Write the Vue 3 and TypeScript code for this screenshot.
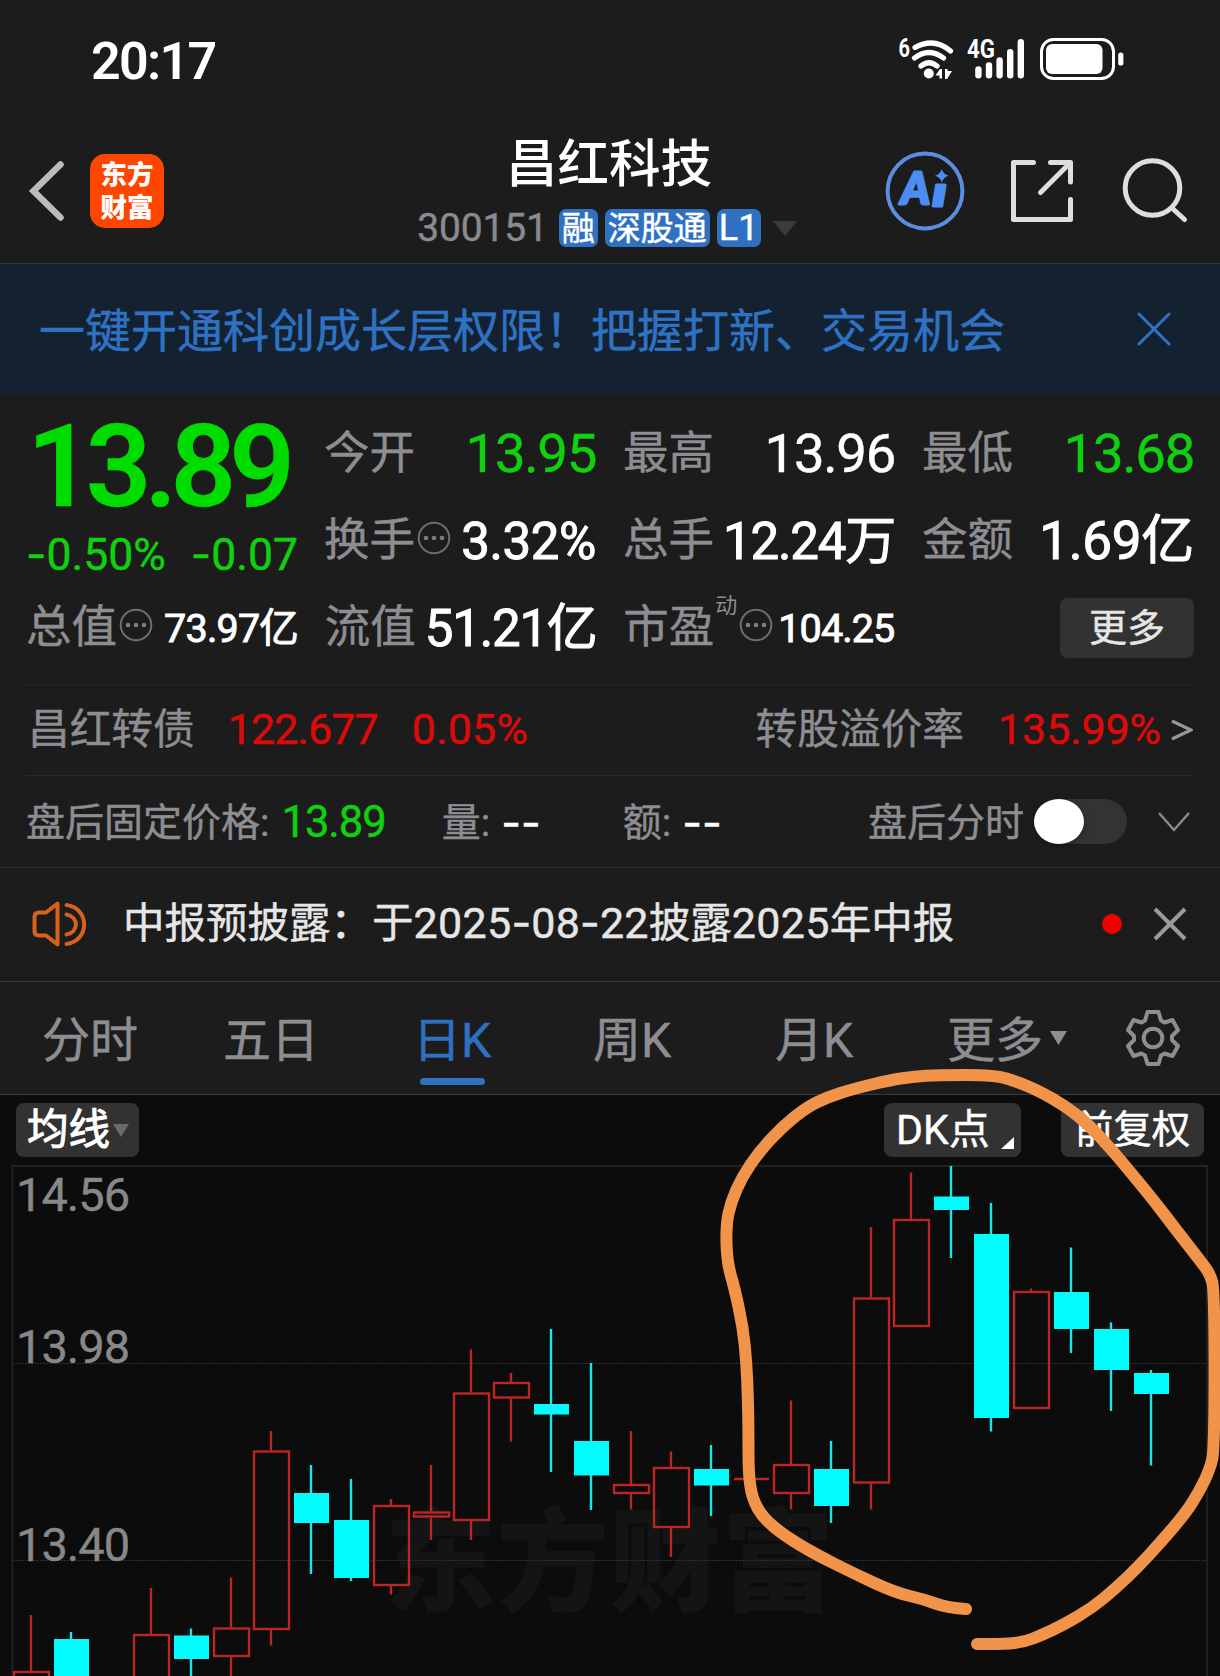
<script setup lang="ts">
import { h } from 'vue'

// Splits out hyphens so they can be set in a face with a wider dash.
const Num = (props: { v: string }) =>
  h('span', { class: 'num' }, props.v.split(/(-)/).filter(Boolean).map((p) => (p === '-' ? h('i', { class: 'dash' }, p) : p)))
Num.props = ['v']

interface Cell { label: string; value: string; tone?: string; size?: string; info?: boolean; sup?: string }
const stats: Cell[][] = [
  [
    { label: '今开', value: '13.95', tone: 'down', size: 'xl' },
    { label: '最高', value: '13.96', size: 'xl' },
    { label: '最低', value: '13.68', tone: 'down', size: 'xl' },
  ],
  [
    { label: '换手', value: '3.32%', size: 'lg pct', info: true },
    { label: '总手', value: '12.24万', size: 'lg' },
    { label: '金额', value: '1.69亿', size: 'lgx' },
  ],
]
const stats3: Cell[] = [
  { label: '总值', value: '73.97亿', size: 'sm', info: true },
  { label: '流值', value: '51.21亿', size: 'lg' },
  { label: '市盈', value: '104.25', size: 'sm pe', info: true, sup: '动' },
]

const tabs = [
  { name: '分时' }, { name: '五日' }, { name: '日K', on: true }, { name: '周K' }, { name: '月K' },
]

// [slot, rising, high, body top, body bottom, low]
const raw: [number, boolean, number, number, number, number][] = [
  [0, true, 1615, 1671, 1700, 1700], [1, false, 1632, 1639, 1700, 1700],
  [3, true, 1588, 1634, 1700, 1700], [4, false, 1628.5, 1635.5, 1659, 1700],
  [5, true, 1577.5, 1627.5, 1657, 1700], [6, true, 1431, 1450.5, 1630, 1645.5],
  [7, false, 1465, 1493, 1523, 1574], [8, false, 1479, 1520, 1578, 1581],
  [9, true, 1499, 1505, 1586, 1594.5], [10, true, 1465, 1511.5, 1517.5, 1540],
  [11, true, 1349.5, 1392.5, 1521, 1540], [12, true, 1373, 1382, 1398.5, 1441.5],
  [13, false, 1329, 1404, 1414.5, 1472], [14, false, 1363, 1441, 1475.5, 1510],
  [15, true, 1431, 1484, 1494, 1509.5], [16, true, 1451.5, 1467, 1528, 1557],
  [17, false, 1445, 1469, 1485.5, 1516], [19, true, 1400.5, 1464, 1494, 1509.5],
  [20, false, 1441, 1469, 1506, 1523], [21, true, 1227, 1297.5, 1483.5, 1509.5],
  [22, true, 1172.5, 1219, 1327, 1327], [23, false, 1166, 1196.5, 1210, 1258],
  [24, false, 1203, 1234, 1418, 1431.5], [25, true, 1288.5, 1291, 1409, 1409],
  [26, false, 1247.5, 1292, 1329, 1353], [27, false, 1322.5, 1329, 1370, 1411],
  [28, false, 1370, 1373, 1394, 1465.5],
]
const candles = raw.map(([i, up, hi, top, bot, lo]) => ({ x: 31 + i * 40, up, hi, top, bot, lo }))

const pts: [number, number][] = [
  [966, 1609], [948, 1608], [923, 1599], [895, 1592.5], [855, 1574], [815, 1554], [785, 1536], [763, 1518],
  [752, 1498], [748.5, 1473], [748.5, 1435], [748, 1400], [746.5, 1363], [743, 1328], [735, 1290], [727, 1262],
  [726, 1225], [731, 1202], [742, 1177], [759, 1152], [782, 1127], [807, 1107], [828, 1097], [853, 1089],
  [890, 1080], [915, 1076.5], [937, 1075], [995, 1075], [1018, 1082], [1040, 1091.5], [1067, 1107], [1089, 1125],
  [1112, 1150], [1132, 1174], [1155, 1202], [1177, 1231], [1202, 1263], [1210, 1274], [1214.5, 1290], [1214.5, 1449],
  [1210, 1469], [1199, 1492], [1185, 1514], [1160, 1543], [1138, 1567], [1116, 1588], [1092, 1608], [1064, 1624.5],
  [1042, 1635], [1024, 1642], [1005, 1644], [977, 1644],
]
const scribble = (() => {
  let d = `M${pts[0][0]} ${pts[0][1]}`
  for (let i = 1; i < pts.length - 1; i++) {
    const [x, y] = pts[i]
    const [nx, ny] = pts[i + 1]
    d += ` Q${x} ${y} ${(x + nx) / 2} ${(y + ny) / 2}`
  }
  const last = pts[pts.length - 1]
  return `${d} L${last[0]} ${last[1]}`
})()
</script>

<template>
  <div class="page">
    <div class="status">
      <span class="time">20:17</span>
      <svg class="sysicons" width="240" height="60" viewBox="890 30 240 60">
        <text x="898.5" y="56.5" class="tiny" textLength="11.5" lengthAdjust="spacingAndGlyphs">6</text>
        <g fill="none" stroke="#fff" stroke-width="5.2" stroke-linecap="round">
          <path d="M915 47.5 Q934 37 950.5 51" />
          <path d="M914.5 58 Q929 47 943.5 58" />
          <path d="M921 66 Q929 59.5 937 66" />
        </g>
        <circle cx="928.8" cy="73.5" r="5" fill="#fff" />
        <path d="M935.5 75.5 L940 69 H942 V78.5 H939.5 V75.5Z M945 69 H947.5 V71 H952 L947 79 H945Z" fill="#fff" />
        <text x="967" y="57.5" class="tiny" textLength="28" lengthAdjust="spacingAndGlyphs">4G</text>
        <g stroke="#fff" stroke-width="6.4" stroke-linecap="round">
          <path d="M978.4 69.5V75.3M989 65.5V75.3M999.6 60.5V75.3M1010.2 52.3V75.3M1020.8 42.3V75.3" />
        </g>
        <rect x="1041.5" y="39.5" width="72" height="39" rx="12" fill="none" stroke="#fff" stroke-width="3" />
        <rect x="1046" y="44" width="56.5" height="30" rx="6" fill="#fff" />
        <rect x="1118.2" y="52.5" width="5.2" height="13" rx="2.6" fill="#fff" />
      </svg>
    </div>

    <header class="header">
      <div class="side">
        <svg width="40" height="64" viewBox="26 159 40 64" fill="none" stroke="#bbb" stroke-width="6.5" stroke-linecap="round">
          <path d="M60.5 164.5 L33.5 191 L60.5 217.5" stroke-linejoin="miter" />
        </svg>
        <div class="logo"><span>东方</span><span>财富</span></div>
      </div>
      <div class="titles">
        <div class="title">昌红科技</div>
        <div class="sub">
          <span class="code">300151</span>
          <span class="tag">融</span><span class="tag">深股通</span><span class="tag l1">L1</span>
          <svg class="caret" width="24" height="15"><path d="M0 0H24L12 15Z" fill="#3b3b3b" /></svg>
        </div>
      </div>
      <svg class="actions" width="310" height="90" viewBox="880 146 310 90" fill="none">
        <circle cx="925" cy="191" r="37.4" stroke="#5a8de0" stroke-width="4" />
        <text x="901" y="204" class="ai" textLength="29" lengthAdjust="spacingAndGlyphs">A</text>
        <text x="932.5" y="206" class="ai i" textLength="14" lengthAdjust="spacingAndGlyphs">ı</text>
        <path d="M941.8 169 Q943.2 174.2 948.5 175.7 Q943.2 177.2 941.800 182.500 Q940.400 177.2 935 175.7 Q940.4 174.2 941.8 169Z" fill="#4d8cf0" />
        <g stroke="#dedede" stroke-width="5" stroke-linecap="round" stroke-linejoin="round">
          <path d="M1033.500 162.500H1013.500V219.500H1070.500V199.500" />
          <path d="M1050.500 162.500H1070.500V182M1040.500 192.500L1069 164" />
          <circle cx="1152.500" cy="188" r="27.3" />
          <path d="M1172.500 208.500L1184.500 219.500" />
        </g>
      </svg>
    </header>

    <div class="banner">
      <span>一键开通科创成长层权限！把握打新、交易机会</span>
      <svg width="34" height="34" stroke="#2f72c4" stroke-width="3" stroke-linecap="round"><path d="M2 2L32 32M32 2L2 32" /></svg>
    </div>

    <section class="quote">
      <div class="top">
        <div class="main">
          <div class="price">13.89</div>
          <div class="chg down"><Num v="-0.50%" /><Num v="-0.07" /></div>
        </div>
        <div class="rows">
          <div v-for="(r, i) in stats" :key="i" class="row">
            <div v-for="c in r" :key="c.label" class="cell">
              <span class="lab">{{ c.label }}</span>
              <svg v-if="c.info" class="info" width="34" height="34" viewBox="0 0 34 34"><circle cx="17" cy="17" r="15.3" fill="none" stroke="#6d6d70" stroke-width="2" /><g fill="#7c7c80"><circle cx="9" cy="17" r="2.3" /><circle cx="17" cy="17" r="2.3" /><circle cx="25" cy="17" r="2.3" /></g></svg>
              <span class="val" :class="[c.size, c.tone]">{{ c.value }}</span>
            </div>
          </div>
        </div>
      </div>
      <div class="row third">
        <div v-for="c in stats3" :key="c.label" class="cell">
          <span class="lab">{{ c.label }}</span>
          <span v-if="c.sup" class="sup">{{ c.sup }}</span>
          <svg v-if="c.info" class="info" width="34" height="34" viewBox="0 0 34 34"><circle cx="17" cy="17" r="15.3" fill="none" stroke="#6d6d70" stroke-width="2" /><g fill="#7c7c80"><circle cx="9" cy="17" r="2.3" /><circle cx="17" cy="17" r="2.3" /><circle cx="25" cy="17" r="2.3" /></g></svg>
          <span class="val" :class="c.size">{{ c.value }}</span>
        </div>
        <div class="cell end"><button class="more">更多</button></div>
      </div>
    </section>

    <div class="bond">
      <span class="bl">昌红转债</span><span class="up b1">122.677</span><span class="up b2">0.05%</span>
      <span class="bl push">转股溢价率</span><span class="up b3">135.99%</span>
      <svg width="22" height="22" fill="none" stroke="#98989c" stroke-width="3.2"><path d="M1 2L20 11L1 20" /></svg>
    </div>

    <div class="after">
      <span class="al">盘后固定价格:</span><span class="down a1">13.89</span>
      <span class="al a2">量:</span><Num class="dd" v="--" />
      <span class="al a3">额:</span><Num class="dd" v="--" />
      <span class="al push">盘后分时</span>
      <span class="toggle"><i></i></span>
      <svg width="34" height="20" fill="none" stroke="#8b8b8f" stroke-width="2.4"><path d="M2 1L17 18L32 1" /></svg>
    </div>

    <div class="notice">
      <svg width="56" height="48" viewBox="32 899 56 48" fill="none" stroke="#d8611c" stroke-width="4" stroke-linecap="round" stroke-linejoin="round">
        <path d="M57.5 902.5V943.5L46 934.5H39Q34.5 934.5 34.5 930V916Q34.5 911.5 39 911.5H46Z" />
        <path d="M66.5 904C90 907 90 940 66.5 943M66.5 913.5C79 916 79 931 66.5 933.5" />
      </svg>
      <span class="ntext">中报预披露：于<Num class="dg" v="2025-08-22" />披露<Num class="dg" v="2025" />年中报</span>
      <i class="dot"></i>
      <svg width="34" height="34" stroke="#9b9b9b" stroke-width="4"><path d="M2 2L32 32M32 2L2 32" /></svg>
    </div>

    <nav class="tabs">
      <span v-for="t in tabs" :key="t.name" class="tab" :class="{ on: t.on }">{{ t.name }}</span>
      <span class="tab tmore">更多<svg width="17" height="14"><path d="M0 0H17L8.5 14Z" fill="#8d8d92" /></svg></span>
      <svg class="gear" width="58" height="60" viewBox="1125 1008 58 60" fill="none" stroke="#8d8d92" stroke-width="4" stroke-linejoin="round">
        <path d="M1148.5 1012H1159.5L1162 1020.5L1165.5 1022.5L1173.5 1020L1179 1030L1173 1036V1040L1179 1046L1173.5 1056L1165.5 1053.5L1162 1055.5L1159.5 1064H1148.5L1146 1055.5L1142.5 1053.5L1134.5 1056L1129 1046L1135 1040V1036L1129 1030L1134.5 1020L1142.5 1022.5L1146 1020.5Z" />
        <circle cx="1154" cy="1038" r="9.3" />
      </svg>
    </nav>

    <section class="chart">
      <div class="tools">
        <button class="tool t1">均线<svg width="16" height="13"><path d="M0 0H16L8 13Z" fill="#6a6a6a" /></svg></button>
        <button class="tool t2">DK点<svg width="13" height="12"><path d="M13 0V12H0Z" fill="#fff" /></svg></button>
        <button class="tool t3">前复权</button>
      </div>
      <svg class="plot" width="1220" height="513" viewBox="0 1163 1220 513" fill="none">
        <text x="384" y="1603" class="mark" textLength="450">东方财富</text>
        <path d="M12.5 1676V1166H1207V1676" stroke="#222" stroke-width="1.8" />
        <path d="M13 1363.5H1207M13 1560.5H1207" stroke="#2f2f2f" stroke-width="1" stroke-dasharray="2 1" />
        <text x="16" y="1210.5" class="axis">14.56</text>
        <text x="16" y="1363" class="axis">13.98</text>
        <text x="16" y="1561" class="axis">13.40</text>
        <template v-for="c in candles" :key="c.x">
          <g v-if="c.up" stroke="#b82626" stroke-width="2.4">
            <path :d="`M${c.x} ${c.hi}V${c.top}M${c.x} ${c.bot}V${c.lo}`" />
            <rect :x="c.x - 17" :y="c.top + 1" width="35" :height="c.bot - c.top - 2" />
          </g>
          <g v-else>
            <path :d="`M${c.x} ${c.hi}V${c.lo}`" stroke="#1be6e6" stroke-width="2.4" />
            <rect :x="c.x - 17" :y="c.top" width="35" :height="c.bot - c.top" fill="#00fcfc" />
          </g>
        </template>
        <path d="M734 1479H769" stroke="#b82626" stroke-width="2.4" />
      </svg>
    </section>

    <svg class="scribble" width="1220" height="1676" fill="none"><path :d="scribble" stroke="#f2934a" stroke-width="12" stroke-linecap="round" stroke-linejoin="round" /></svg>
  </div>
</template>

<style>
body { background: #1c1c1c; overflow: hidden; }
.num { white-space: nowrap; }
.num .dash { font-family: Inter, sans-serif; font-style: normal; letter-spacing: 0; }
</style>

<style scoped>
.page { position: relative; width: 1220px; height: 1676px; overflow: hidden; background: #1c1c1c; color: #fff; font-family: Roboto, "Noto Sans CJK SC", sans-serif; line-height: 1; white-space: nowrap; display: flex; flex-direction: column; }
.page * { box-sizing: border-box; }
.page > * { flex: none; }
.quote, .bond, .after, .notice, .tabs, .tools, .banner, .sub { -webkit-text-stroke-width: .45px; }
svg { display: block; flex: none; }
button { border: 0; font: inherit; color: inherit; padding: 0; line-height: 1; }
.up { color: #dc0a0a; }
.down { color: #10d010; }
.push { margin-left: auto; }

.status { height: 120px; display: flex; align-items: center; justify-content: space-between; padding: 0 90px 0 91px; }
.time { font-size: 52px; font-weight: 600; letter-spacing: -1.7px; padding-top: 3px; }
.tiny { font: 700 26px Roboto, sans-serif; fill: #fff; }

.header { height: 144px; display: flex; justify-content: space-between; border-bottom: 1px solid #3a3a3a; padding: 0 30px 0 26px; }
.side { display: flex; align-items: center; height: 142px; gap: 24px; width: 310px; }
.logo { width: 74px; height: 74px; border-radius: 15px; background: #ff4600; display: flex; flex-direction: column; align-items: center; justify-content: center; font-size: 26.5px; font-weight: 900; gap: 5.5px; line-height: 27px; }
.titles { display: flex; flex-direction: column; align-items: center; padding-top: 19px; margin-left: -2px; }
.title { font-size: 51.5px; font-weight: 500; height: 51px; margin-left: 4px; }
.sub { display: flex; align-items: center; margin-top: 18px; height: 40px; }
.code { font-size: 39px; color: #8a8a90; margin-right: 11px; letter-spacing: -.2px; }
.tag { background: #3070c0; border-radius: 7px; height: 38px; line-height: 39px; font-size: 33px; padding: 0 3px; margin-right: 7px; }
.tag.l1 { width: 44px; text-align: center; font-size: 36px; padding: 0; }
.caret { margin-left: 5px; }
.actions { margin-top: 26px; }
.ai { font: italic 900 44px Lato, sans-serif; fill: #4d8cf0; stroke: #4d8cf0; stroke-width: 2.8px; stroke-linejoin: round; }
.ai.i { font-size: 40px; }

.banner { height: 130px; background: #142130; color: #2f72c4; display: flex; align-items: center; justify-content: space-between; padding: 0 49px 0 39px; font-size: 46px; }
.banner span { padding-top: 3px; }

.quote { height: 290px; padding: 0 26px; }
.top { display: flex; justify-content: space-between; height: 189px; }
.main { width: 272px; }
.price { color: #00dc00; font-size: 115px; font-weight: 600; letter-spacing: -6.9px; line-height: 92px; margin: 27px 0 0 1px; }
.chg { display: flex; justify-content: space-between; font-size: 44.5px; line-height: 46px; margin-top: 18px; }
.rows { width: 870px; padding-top: 16px; }
.row { display: flex; justify-content: space-between; }
.rows .row { height: 87px; }
.third { padding-top: 2px; }
.cell { width: 272px; height: 87px; display: flex; align-items: center; }
.third .cell { height: 85px; }
.lab { color: #8d8d92; font-size: 45.5px; padding-top: 1px; }
.val { margin-left: auto; }
.xl { font-size: 54.5px; letter-spacing: -1.3px; }
.lg { font-size: 51px; letter-spacing: -1.2px; padding-top: 2px; -webkit-text-stroke-width: 1px; }
.lg.pct { letter-spacing: -.4px; }
.lgx { font-size: 53px; letter-spacing: -.3px; padding-top: 2px; -webkit-text-stroke-width: 1px; }
.sm { font-size: 39.5px; letter-spacing: -.8px; padding-top: 3px; -webkit-text-stroke-width: .9px; }
.pe { letter-spacing: -.9px; margin-right: 1px; }
.info { margin-left: 2px; margin-bottom: 5px; }
.sup { color: #8d8d92; font-size: 22px; margin: -44px 0 0 1px; -webkit-text-stroke-width: 0; }
.end { justify-content: flex-end; }
.more { width: 134px; height: 60px; border-radius: 8px; background: #323232; font-size: 38px; color: #e6e6e6; }

.bond { height: 92px; margin: 0 26px; border-top: 2px solid #222; border-bottom: 1px solid #2a2a2a; display: flex; align-items: center; padding: 0 1px 0 2px; font-size: 43px; }
.bond span { margin-top: -2px; }
.bond svg { margin-top: -2px; }
.bl { color: #8d8d92; font-size: 41.7px; }
.b1 { margin-left: 33px; letter-spacing: -.9px; }
.b2 { margin-left: 34px; letter-spacing: .2px; }
.b3 { margin: 0 10px 0 34px; letter-spacing: -.1px; }

.after { height: 92px; border-bottom: 1px solid #2a2a2a; display: flex; align-items: center; padding: 0 29px 0 26px; }
.al { color: #8d8d92; font-size: 39px; padding-top: 3px; }
.a1 { font-size: 43.5px; margin-left: 12px; letter-spacing: -1px; padding-top: 3px; }
.a2 { margin-left: 56px; }
.a3 { margin-left: 82px; }
.dd { font-size: 43px; margin-left: 11px; padding-top: 3px; }
.toggle { width: 93px; height: 45px; border-radius: 23px; background: #333; margin: 0 30px 0 10px; }
.toggle i { display: block; width: 50px; height: 45px; border-radius: 50%; background: #fff; box-shadow: 0 2px 6px rgba(0, 0, 0, .3); }

.notice { height: 114px; border-bottom: 1px solid #3a3a3a; display: flex; align-items: center; padding: 0 33px 0 32px; }
.notice svg { margin-top: -2px; }
.ntext { font-size: 41.5px; color: #e6e6e6; margin-left: 35px; margin-top: -3px; }
.dg { font-size: 43px; letter-spacing: .3px; }
.dot { width: 20px; height: 20px; border-radius: 50%; background: #f00000; margin: -2px 31px 0 auto; }

.tabs { height: 113px; border-bottom: 1px solid #3a3a3a; display: flex; align-items: center; color: #8d8d92; font-size: 48px; padding-left: 42px; }
.tab { width: 181px; position: relative; padding-top: 5px; }
.tab.on { color: #3070c0; }
.tab:nth-child(3) { padding-left: 9px; }
.tab:nth-child(4) { padding-left: 8px; }
.tab:nth-child(5) { padding-left: 9px; }
.tab.on::after { content: ""; position: absolute; left: 16px; top: 66px; width: 65px; height: 7px; border-radius: 4px; background: #3070c0; }
.tmore { display: flex; align-items: center; padding-left: 0; gap: 7px; }
.tmore svg { margin-top: -6px; }
.gear { margin-left: -4px; }

.chart { background: #0c0c0c; height: 581px; }
.tools { height: 68px; padding: 8px 16px 0; display: flex; }
.tool { height: 54px; border-radius: 8px; background: #323232; display: flex; align-items: center; font-weight: 400; color: #fff; }
.t1 { width: 123px; font-size: 41.5px; padding-left: 11px; gap: 3px; -webkit-text-stroke-width: 1px; }
.t2 { width: 137px; font-size: 41px; margin-left: auto; padding-left: 12px; position: relative; }
.t2 svg { position: absolute; right: 7px; bottom: 8px; }
.t3 { width: 143px; font-size: 38.5px; margin-left: 40px; justify-content: center; }
.axis { font: 47px Roboto, sans-serif; fill: #888; stroke: #888; stroke-width: .4px; letter-spacing: -1px; }
.mark { font: 900 112px "Noto Sans CJK SC", sans-serif; fill: #141414; }
.scribble { position: absolute; left: 0; top: 0; pointer-events: none; }
</style>
